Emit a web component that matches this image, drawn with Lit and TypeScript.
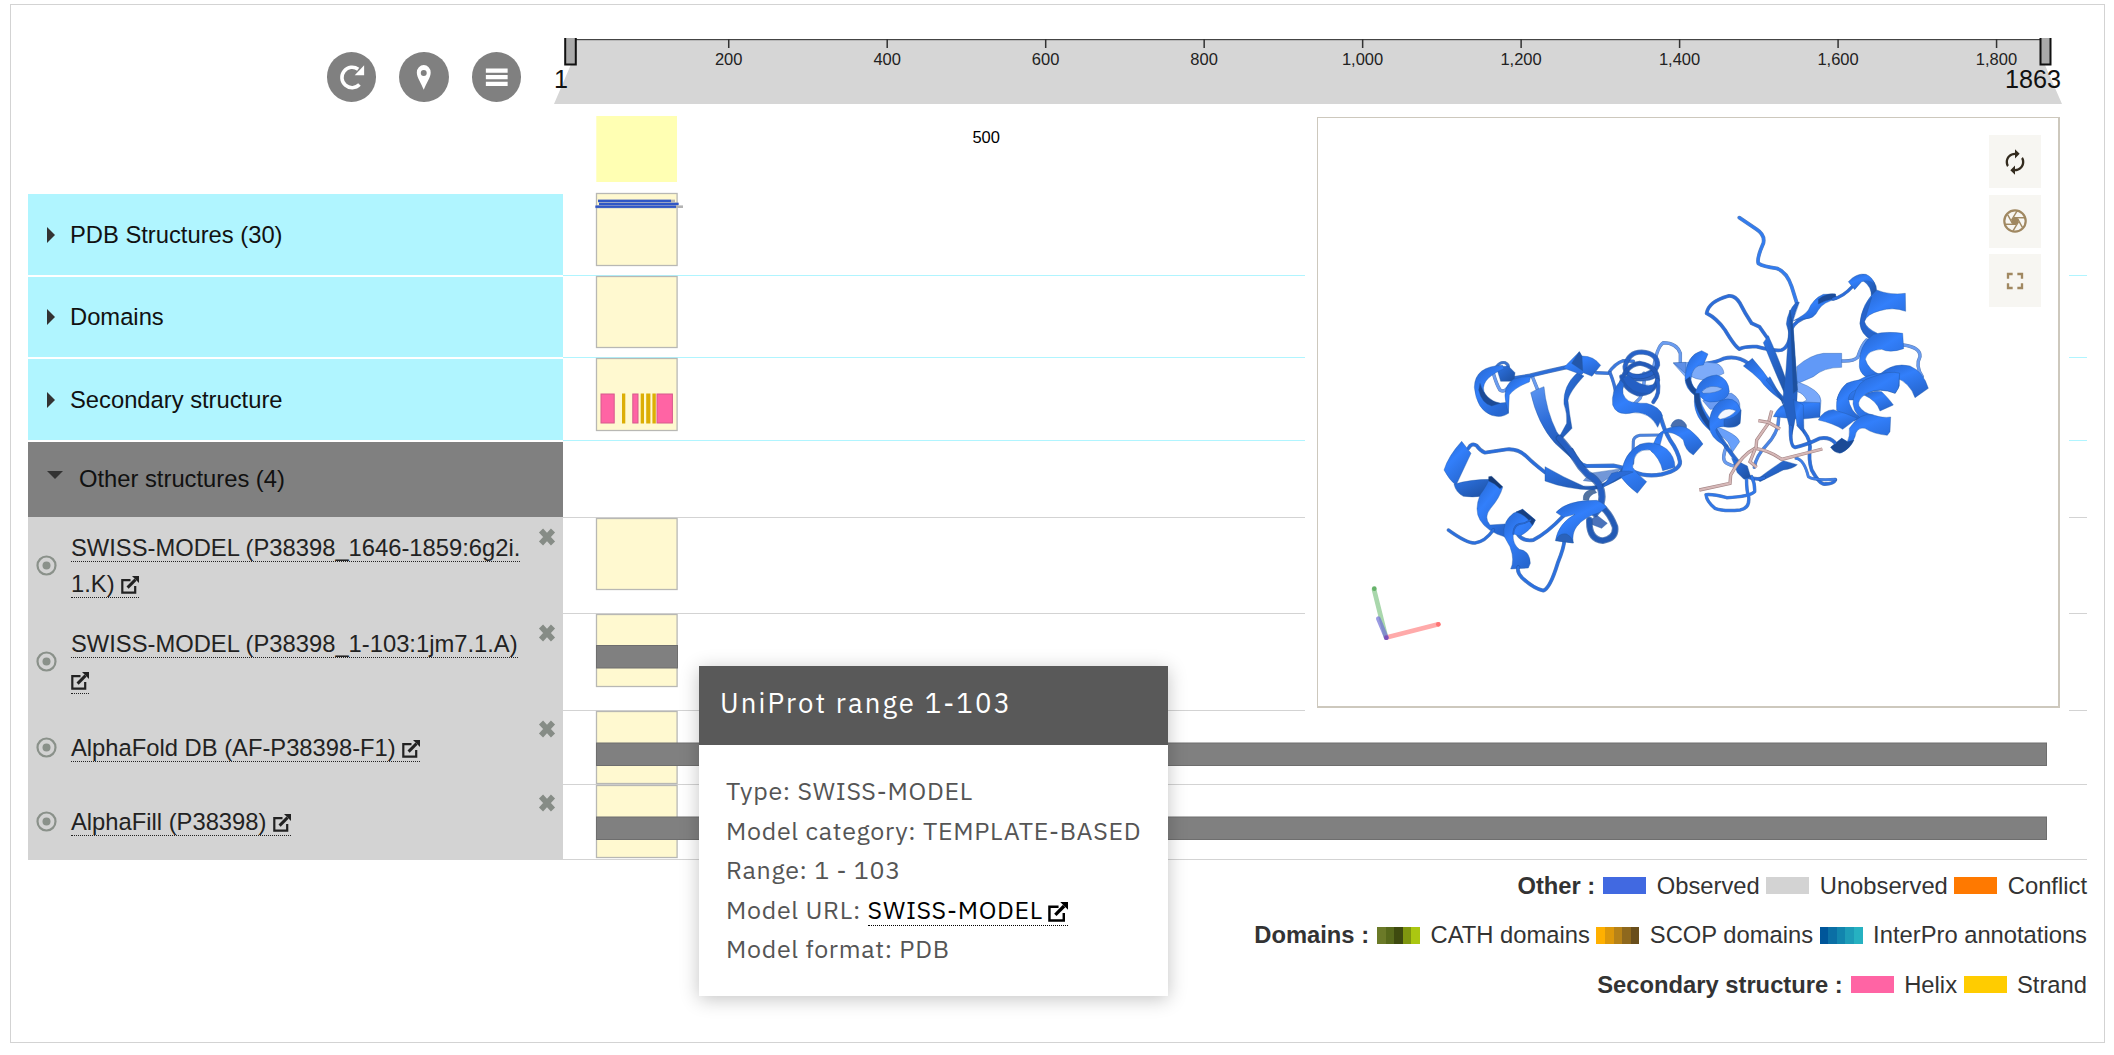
import { LitElement, html, svg, css } from "lit";
import { customElement, property } from "lit/decorators.js";

const BASE = "url(#ribbon)";
const DARK = "url(#ribbonDark)";
const LIGHT = "url(#ribbonLight)";
const DEEP = "#1b4a96";

type Shape = { k: "fill" | "coil" | "band"; d: string; c?: string; w?: number };
const f = (d: string, c: string = BASE): Shape => ({ k: "fill", d, c });
const coil = (d: string, c = "#2f78e8", w = 10): Shape => ({ k: "coil", d, c, w: w < 12 ? w * 1.15 : w });
const faint = (d: string): Shape => coil(d, "#6a9cf0", 9);

const leftDomain: Shape[] = [
  faint("M580 -20Q590 15 600 30Q612 38 622 25"),
  faint("M698 -8L712 27"),
  faint("M1060 -30Q1070 -100 1090 -112Q1130 -112 1141 -80L1141 -45"),
  faint("M1032 -20Q1036 20 1020 55L1000 75"),
  coil("M1080 165L1020 166Q1000 170 1000 185L998 250", "#4a83e0", 8),
  f("M870 280Q900 275 965 266L905 308L850 302Z", "#7297d8"),
  f("M1112 138Q1122 112 1145 120Q1165 132 1158 150L1120 146Z", "#4a6fae"),
  f("M850 360Q846 332 882 326L890 338Q866 345 866 362Z", "#54739f"),
  f("M862 428L905 445L922 430L890 405Z", "#4a72ba"),
  coil("M590 -40Q600 -55 615 -52Q628 -45 624 -36", "#3a74cf", 8),
  coil("M640 -5L690 -13L740 -25L797 -38", "#2c6dd8", 11),
  f("M692 38L707 30L732 20Q738 90 770 155L795 190L838 245L820 240L765 190Q712 130 692 38Z", LIGHT),
  f("M832 -22L852 -12Q806 38 804 62Q808 100 816 145L782 180L776 174L800 130Q802 100 792 72Q788 18 832 -22Z", DARK),
  coil("M815 210Q835 255 860 258L940 257Q975 263 1000 275Q1040 292 1085 283Q1142 270 1140 245Q1135 215 1110 180Q1092 150 1083 115", "#2b70df", 11),
  coil("M735 277Q700 250 680 230Q655 205 620 208L555 218Q540 212 530 197Q515 187 505 205", "#2a6ddb", 10),
  f("M735 260Q790 292 850 318Q900 325 950 285L968 262L968 292Q922 320 880 330Q800 328 735 303Z", DARK),
  f("M1055 215Q1062 165 1095 148Q1145 128 1170 150Q1195 170 1209 192L1180 225Q1155 212 1150 180Q1120 150 1090 160Q1080 190 1075 225Z"),
  f("M965 280Q970 220 1020 193Q1060 178 1100 207Q1125 230 1125 262L1088 272Q1080 235 1050 210Q1000 205 998 262Q1010 282 1040 305L1012 340Q980 315 962 290Z"),
  coil("M778 175Q808 208 825 235Q840 262 862 282Q905 305 906 350Q905 380 885 400", "#255fc2", 22),
  f("M935 280Q975 268 1000 276L960 292L905 325Z", "#2b6bd6"),
  f("M485 184L513 220L468 316Q448 300 432 270Q445 228 485 184Z"),
  f("M462 313Q510 298 572 298L548 348Q520 353 490 349Q468 338 462 313Z", DARK),
  f("M570 290L608 322Q600 352 572 385Q550 412 570 435L615 432L618 472Q560 455 540 420Q522 390 540 345Q564 312 570 290Z"),
  f("M566 290L575 289L608 320L600 326Q585 310 566 303Z", "#163a75"),
  coil("M445 450Q500 490 525 489Q555 485 580 450", "#2b6fdd", 9),
  coil("M655 465Q670 485 700 480Q740 460 790 408", "#2b6fdd", 10),
  f("M612 468Q606 425 640 400L668 388L706 420Q695 450 660 468L640 462Q636 490 658 508Q690 512 691 550L685 564L632 567Q645 540 630 500Z"),
  f("M648 396L668 388L706 420L697 436Q680 405 648 396Z", "#173f80"),
  coil("M640 462Q640 430 672 430L692 420", "#2866cb", 4),
  coil("M655 562Q650 575 665 592Q700 625 730 632Q750 625 773 550Q793 500 793 480", "#2b70df", 10),
  coil("M868 420Q866 478 908 482Q950 475 945 440Q930 400 905 380", "#225ab5", 20),
  f("M768 397Q800 360 890 361Q915 372 920 382L900 397Q850 412 830 440Q815 460 820 489L766 482Q775 430 825 403L790 412Z"),
  f("M768 482Q776 458 800 462Q816 470 820 489Z", "#2a62bb"),
  f("M590 -35Q605 -42 625 -42L645 -22L642 4L602 4Z", DARK),
  f("M608 -44Q524 -42 523 22Q530 90 575 106Q605 115 625 100L624 66Q575 78 556 45Q532 0 612 -34Z"),
  f("M536 30Q545 70 575 78L600 70Q555 60 540 10Z", DEEP),
  f("M618 70Q606 20 640 -2Q665 -12 692 -10L688 6Q645 22 628 45L625 100Z"),
  f("M790 -36L838 -85L846 -72Q882 -72 902 -44L876 -11L850 -22L845 -16Z"),
  f("M838 -85L846 -70L848 -28L815 -50Z", "#2357aa"),
  coil("M888 -22L925 -20Q945 -50 970 -58L1000 -56", "#3b79df", 9),
  coil("M930 -22Q945 15 947 40", "#3672da", 9),
  f("M980 -25Q1010 -5 1060 -35L1070 -8Q1040 10 990 0Z", "#3265be"),
  coil("M975 -40Q985 -84 1025 -84Q1073 -80 1073 -45Q1060 -8 1010 -10Q975 -15 975 -40Z", "#2762c8", 15),
  coil("M962 25Q970 -45 1020 -50Q1073 -40 1073 0Q1060 42 1015 42Q975 30 965 -10", "#2359b7", 15),
  f("M968 -5Q990 45 1050 40L1070 10Q1030 30 985 -15Z", "#245fc4"),
  f("M938 75Q932 35 962 0L972 12Q960 45 985 62Q1000 70 1040 70Q1080 80 1088 108L1073 142Q1050 95 1000 98Q950 110 938 75Z"),
  coil("M1072 0Q1082 40 1060 66", "#2762c8", 11),
];

const upperRight: Shape[] = [
  faint("M670 735Q722 742 720 770Q705 798 727 830"),
  faint("M485 783Q520 785 533 772Q545 735 560 720"),
  f("M350 800Q390 765 430 760L485 760L485 802Q430 802 400 830L350 852Z", "#6199f7"),
  coil("M262 714L238 680L215 670Q195 640 180 610Q165 585 145 588Q85 605 80 640Q110 655 135 690Q165 740 178 747Q195 738 230 740Q290 755 305 750Q330 740 332 690Q345 660 390 648", "#2b6cda", 10),
  coil("M178 353L230 388Q256 405 250 430Q230 475 235 490Q250 500 290 505Q320 515 335 560L350 608", "#327cef", 10),
  coil("M80 790Q110 786 130 776Q170 765 205 790", "#2f70de", 10),
  f("M250 728L265 707Q290 760 322 850L322 900Q280 805 250 728Z", DARK),
  f("M190 798L217 775Q250 812 275 850Q300 880 330 912L310 905Q262 872 240 840Q218 818 190 798Z"),
  f("M319 672Q322 635 348 607L358 607Q336 660 330 712Z", DARK),
  f("M340 662Q375 645 385 630Q400 595 430 583L466 582L470 598Q430 605 415 630Q402 658 375 656Z"),
  f("M415 598Q440 578 466 582L468 595Q440 600 415 612Z", "#1c4b99"),
  coil("M460 597Q490 590 517 560", "#2b6cda", 9),
  f("M558 530Q590 540 590 572L574 592Q576 560 550 543Z", DARK),
  f("M505 545Q530 518 558 523Q578 532 584 552Q565 538 545 545L524 569Z"),
  f("M540 670Q545 610 590 570Q630 586 676 580L677 634Q640 620 600 632Q560 642 553 665Q560 685 592 700L575 720Q543 705 540 670Z"),
  f("M553 665L575 592Q545 625 540 670Q543 700 575 720L590 703Q556 690 553 665Z", "#2764cb"),
  f("M538 800Q535 735 580 703Q620 693 668 700L671 746Q630 760 605 748Q562 750 556 778Q565 810 602 825L590 845Q540 830 538 800Z"),
  f("M600 822Q640 786 690 798Q730 815 745 865L705 893Q690 848 645 832Z"),
  f("M470 900Q480 860 530 843Q580 812 658 820L658 858L646 880Q600 862 560 880Q540 885 525 900Z"),
];

const lowerRight: Shape[] = [
  f("M412 155Q482 180 483 212L480 250L415 225L440 210Q430 190 412 185Z", "#78a8fa"),
  f("M40 100L75 98Q120 90 170 100Q190 110 192 130L160 145Q120 155 95 140L80 145Z", "#7dabf9"),
  f("M40 98L78 97L76 130Z", "#5d8ee6"),
  f("M128 212Q170 186 215 190Q242 205 240 235L150 238Z", "#6b9cf2"),
  f("M165 288Q232 312 239 335L215 370Q212 330 175 315Z", "#69a0fa"),
  faint("M200 348Q182 390 200 400Q220 412 240 408"),
  coil("M356 265Q356 308 320 345Q288 378 283 412", "#4884e8", 9),
  coil("M415 285Q450 320 450 350Q445 390 455 420Q480 465 495 462Q520 462 526 450", "#2c6fdd", 10),
  coil("M526 448Q462 452 445 440Q432 388 408 385", "#3e7fe9", 8),
  f("M292 448Q320 425 370 392L412 404Q400 416 370 420Q330 440 300 455Z", DARK),
  coil("M262 440Q290 452 312 443", "#2b6cda", 10),
  coil("M260 425Q258 480 266 500Q270 535 240 540Q190 545 165 535Q140 515 138 494Q160 492 200 503Q270 500 284 485Q285 460 275 440", "#3077e8", 9),
  coil("M160 290Q195 350 245 410", "#2869d3", 13),
  f("M215 385L262 408L272 440L252 448L232 428Z", DARK),
  f("M340 260Q355 230 370 225L400 215L480 218L480 262L420 268Z"),
  f("M318 150Q355 190 372 230L366 205L330 140Z", DARK),
  f("M390 -60L400 0L412 180Q412 250 395 322L383 270L368 212L378 120Z", "#2461c4"),
  f("M390 -60L400 0L412 180L400 190Z", "#1d509f"),
  f("M400 208L430 225L432 310L410 280Z"),
  f("M75 145Q78 75 125 62L144 72L130 105Q95 105 93 150Q96 172 118 185L105 197Q75 175 75 145Z"),
  f("M76 150Q84 180 105 195L110 180Q94 170 90 140Z", DEEP),
  f("M103 215Q105 140 170 135Q206 145 208 185Q200 217 150 216Q132 214 122 200Q118 220 150 265L150 302Q103 262 103 215Z"),
  f("M125 185Q150 158 188 176Q170 190 130 190Z", "#8fb5f5"),
  f("M103 190Q100 240 150 300L156 285Q118 240 118 190Z", DEEP),
  f("M148 290Q145 240 180 213Q225 192 243 240L240 280Q230 297 190 290Q170 290 167 300Q170 320 205 352L190 345Q150 322 148 290Z"),
  f("M173 262Q190 226 228 242Q212 262 180 268Z", "#f3f7ff"),
  f("M192 268Q225 268 243 240L240 280Q220 296 192 288Z", DARK),
  f("M530 240Q525 190 560 160Q600 145 612 153L600 178Q570 180 565 205Q570 245 605 265L582 272Q550 262 530 240Z"),
  f("M612 195Q640 180 665 185Q690 210 700 225L660 243Q650 212 612 195Z"),
  f("M580 205Q590 150 640 140Q690 120 719 130L715 175L705 190Q660 170 620 190Q590 210 597 228Q610 250 640 255L608 272Q573 240 580 205Z"),
  f("M475 270Q490 240 520 239Q560 250 592 265L548 298Q520 280 475 270Z"),
  f("M568 295Q600 245 640 255Q670 265 692 261L690 305L682 316Q640 312 615 295Q590 290 585 320Q572 355 545 368L512 352L545 325L562 335Q570 320 568 295Z"),
  f("M512 352L545 325L562 335L582 330Q570 358 540 370Q522 368 512 352Z", DEEP),
  coil("M392 290Q390 350 405 352Q440 345 480 325Q508 320 525 338", "#2a6cda", 10),
];

const ligand = [
  "M118 480L210 460L212 435Q245 375 285 355Q325 360 365 388L487 357",
  "M288 355L290 330L325 280L335 242",
  "M295 272L325 277L360 297",
  "M285 358L270 395L290 412",
];

const drawShapes = (list: Shape[]) =>
  list.map((s) =>
    s.k === "fill"
      ? svg`<path d=${s.d} fill=${s.c} stroke="#22569f" stroke-opacity=".55" stroke-width="2" stroke-linejoin="round"/>`
      : svg`<path d=${s.d} fill="none" stroke="#1c4d98" stroke-opacity=".7" stroke-width=${s.w!} stroke-linecap="round" stroke-linejoin="round"/>
            <path d=${s.d} fill="none" stroke=${s.c!} stroke-width=${s.w! * 0.72} stroke-linecap="round" stroke-linejoin="round"/>`
  );

const externalIcon = html`<svg class="ext" viewBox="0 0 18 18">
  <path d="M9.5 4.2H1.3V16.7H14.2V10" fill="none" stroke="currentColor" stroke-width="2.2" />
  <path d="M6.6 11.6L14.5 3.6" stroke="currentColor" stroke-width="3" />
  <path d="M11 0H18V7Z" fill="currentColor" />
</svg>`;

@customElement("structure-viewer")
class StructureViewer extends LitElement {
  static styles = css`
    :host { display: block; background: #fff; padding: 12px 9px 12px 12px; box-sizing: border-box; }
    .frame { position: relative; box-sizing: border-box; width: 743px; height: 591px; border: 1px solid #cdc8bd; border-right-width: 2px; border-bottom-width: 2px; }
    .canvas { display: block; width: 740px; height: 588px; }
    .controls { position: absolute; top: 17px; right: 17px; display: flex; flex-direction: column; gap: 6.5px; }
    .control { width: 52px; height: 53px; background: #f7f6f2; color: #a08861; display: flex; align-items: center; justify-content: center; }
    .control.active { color: #332b1f; }
    .control svg { width: 28px; height: 28px; }
  `;
  render() {
    return html`<div class="frame">
      <svg class="canvas" viewBox="1318 118 740 588">
        <defs>
          <linearGradient id="ribbon" x1="0" y1="0" x2=".6" y2="1">
            <stop offset="0" stop-color="#2563c9" /><stop offset=".45" stop-color="#327ffb" /><stop offset="1" stop-color="#2767d0" />
          </linearGradient>
          <linearGradient id="ribbonDark" x1="0" y1="0" x2="1" y2="1">
            <stop offset="0" stop-color="#2d74e6" /><stop offset="1" stop-color="#1d4f9f" />
          </linearGradient>
          <linearGradient id="ribbonLight" x1="0" y1="0" x2=".3" y2="1">
            <stop offset="0" stop-color="#5d97f3" /><stop offset=".5" stop-color="#2f6ed9" /><stop offset="1" stop-color="#2257ae" />
          </linearGradient>
        </defs>
        <g transform="translate(1300 380) scale(.33333)">
          ${drawShapes(leftDomain)}
          <g fill="none" stroke-linecap="round" stroke-width="14">
            <path d="M222 628L258 772" stroke="#a9d7ac" />
            <path d="M262 772L415 733" stroke="#ffaaaa" />
            <path d="M235 716L259 773" stroke="#6f6fd6" stroke-opacity=".7" />
          </g>
          <circle cx="223" cy="626" r="7" fill="#66b26a" />
          <circle cx="415" cy="733" r="7" fill="#ff7373" />
          <circle cx="259" cy="773" r="7" fill="#7d52b8" />
        </g>
        <g transform="translate(1680 100) scale(.33333)">${drawShapes(upperRight)}</g>
        <g transform="translate(1660 330) scale(.33333)">
          ${drawShapes(lowerRight)}
          ${ligand.map((d) => svg`<path d=${d} fill="none" stroke="#a58787" stroke-width="10"/><path d=${d} fill="none" stroke="#d6b8b8" stroke-width="6"/>`)}
        </g>
      </svg>
      <div class="controls">
        <div class="control active">
          <svg viewBox="0 0 24 24" fill="currentColor"><path d="M12 6v3l4-4-4-4v3c-4.42 0-8 3.58-8 8 0 1.57.46 3.03 1.24 4.26L6.7 14.8c-.45-.83-.7-1.79-.7-2.8 0-3.31 2.69-6 6-6zm6.76 1.74L17.3 9.2c.44.84.7 1.79.7 2.8 0 3.31-2.69 6-6 6v-3l-4 4 4 4v-3c4.42 0 8-3.58 8-8 0-1.57-.46-3.03-1.24-4.26z" /></svg>
        </div>
        <div class="control">
          <svg viewBox="-14 -14 28 28" fill="none" stroke="currentColor">
            <circle r="10.7" stroke-width="2.2" /><circle r="3.6" fill="currentColor" stroke="none" />
            ${[0, 60, 120, 180, 240, 300].map((a) => svg`<path d="M-1 -3.4L9.2 -3.2" stroke-width="1.4" transform=${`rotate(${a})`}/>`)}
          </svg>
        </div>
        <div class="control">
          <svg viewBox="0 0 24 24" fill="currentColor"><path d="M7 14H5v5h5v-2H7v-3zm-2-4h2V7h3V5H5v5zm12 7h-3v2h5v-5h-2v3zM14 5v2h3v3h2V5h-5z" /></svg>
        </div>
      </div>
    </div>`;
  }
}

@customElement("legend-row")
class LegendRow extends LitElement {
  @property() title_ = "";
  @property({ attribute: false }) items: { label: string; colors: string[] }[] = [];
  static styles = css`
    :host { display: flex; justify-content: flex-end; align-items: center; height: 49.5px; font: 23.75px/28px "Liberation Sans", Arial, sans-serif; color: #333; white-space: nowrap; }
    .name { font-weight: bold; margin-right: 1.5px; }
    .swatch { display: flex; width: 43px; height: 17px; margin: 0 10.5px 0 6.5px; }
    .swatch i { flex: 1; }
  `;
  render() {
    return html`<span class="name">${this.title_} :</span>
      ${this.items.map((i) => html`<span class="swatch">${i.colors.map((c) => html`<i style="background:${c}"></i>`)}</span><span>${i.label}</span>`)}`;
  }
}

type Row = {
  kind: "closed" | "open" | "model";
  label: string;
  top: number;
  height: number;
  line: number;
  lineColor: string;
  box?: [number, number];
  bar?: [number, number];
};

const CYAN = "#b0f5ff";
const GREY = "#d3d3d3";
const rows: Row[] = [
  { kind: "closed", label: "PDB Structures (30)", top: 194, height: 83, line: 275, lineColor: CYAN, box: [193, 266] },
  { kind: "closed", label: "Domains", top: 277, height: 82, line: 357, lineColor: CYAN, box: [276, 348] },
  { kind: "closed", label: "Secondary structure", top: 359, height: 83, line: 440, lineColor: CYAN, box: [358, 431] },
  { kind: "open", label: "Other structures (4)", top: 442, height: 75, line: 517, lineColor: GREY },
  { kind: "model", label: "SWISS-MODEL (P38398_1646-1859:6g2i.1.K)", top: 517, height: 96, line: 613, lineColor: GREY, box: [518, 590] },
  { kind: "model", label: "SWISS-MODEL (P38398_1-103:1jm7.1.A)", top: 613, height: 97, line: 710, lineColor: GREY, box: [614, 687], bar: [645, 678] },
  { kind: "model", label: "AlphaFold DB (AF-P38398-F1)", top: 710, height: 74, line: 784, lineColor: GREY, box: [711, 784], bar: [742.5, 2047] },
  { kind: "model", label: "AlphaFill (P38398)", top: 784, height: 76, line: 859, lineColor: GREY, box: [785, 858], bar: [816.5, 2047] },
];

const pdbBars = [
  { y: 200, x: 598, w: 73, tail: 4 },
  { y: 203, x: 599, w: 79.5, tail: 0 },
  { y: 205.8, x: 595.5, w: 80.5, tail: 7 },
];
const helices = [[601, 13.2], [632.8, 5.2], [657, 15.4]];
const strands = [[622, 3.3], [640.7, 3.3], [646.2, 4.2], [652.4, 3.4]];

@customElement("app-root")
class AppRoot extends LitElement {
  static styles = css`
    :host { display: block; height: 1055px; overflow: hidden; background: #fff; font: 23.75px/28px "Liberation Sans", Arial, sans-serif; color: #111; }
    .panel { position: relative; box-sizing: border-box; width: 2095px; height: 1039px; margin-left: 10px; border: 1px solid #d3d3d3; padding: 0 17px; }
    .page { padding-top: 4px; }
    .header { display: flex; height: 189px; }
    .tools { box-sizing: border-box; width: 535px; padding: 47px 42px 0 0; display: flex; justify-content: flex-end; gap: 23px; }
    .tool { width: 49.5px; height: 50px; border-radius: 50%; background: #808080; }
    .tool svg { display: block; width: 100%; height: 100%; }
    .ruler, .track { display: block; width: 1524px; overflow: visible; flex: none; }
    .tick { font: 16.5px "Liberation Sans", Arial, sans-serif; fill: #222; text-anchor: middle; }
    .edge { font: 25.2px "Liberation Sans", Arial, sans-serif; fill: #111; }
    .row { display: flex; }
    .label { box-sizing: border-box; width: 535px; flex: none; display: flex; }
    .closed { margin-bottom: 2px; background: #b0f5ff; align-items: center; padding-left: 19px; gap: 15px; }
    .closed::before { content: ""; border: solid transparent; border-width: 8.5px 0 8.5px 8.5px; border-left-color: #333; }
    .open { background: #808080; padding: 22px 0 0 19px; gap: 16px; line-height: 30px; }
    .open::before { content: ""; width: 0; height: 0; margin-top: 7px; border: solid transparent; border-width: 8px 8px 0; border-top-color: #333; }
    .model { background: #d3d3d3; padding: 0 7px 0 8px; color: #222; }
    .radio { width: 21px; height: 21px; flex: none; margin-top: 37.5px; }
    .short .radio { margin-top: 26.5px; }
    .text { width: 455px; margin: 12.7px 0 0 14px; line-height: 36px; word-break: break-all; }
    .short .text { margin-top: 19.7px; }
    .link { border-bottom: 1.5px dotted currentColor; }
    .ext { width: 18px; height: 18px; vertical-align: -2px; }
    .close { width: 18px; height: 18px; margin: 11px 0 0 auto; flex: none; }
    .short .close { margin-top: 10px; }
    .legend { padding-top: 1px; }
    .viewer { position: absolute; left: 1294px; top: 100px; width: 764px; height: 615px; }
    .tip { position: absolute; left: 688px; top: 661px; width: 469px; height: 330px; background: #fff; box-shadow: 0 3px 18px rgba(0,0,0,.24); font-family: "IBM Plex Sans", "Noto Sans", sans-serif; color: #555; }
    .tip-head { height: 79px; box-sizing: border-box; background: #595959; color: #fff; padding: 17px 0 0 21px; font-size: 27.5px; line-height: 40px; letter-spacing: 2.1px; white-space: nowrap; }
    .tip-body { padding: 26px 27px; font-size: 25px; line-height: 39.5px; letter-spacing: .7px; white-space: nowrap; }
    .tip-body .link { color: #000; display: inline-block; line-height: 30px; }
    .tip-body .ext { width: 20px; height: 20px; vertical-align: -3px; margin-left: -2px; }
  `;

  private track(r: Row, i: number) {
    const h = r.height;
    return html`<svg class="track" style="height:${h}px" viewBox="563 ${r.top} 1524 ${h}">
      <rect x="563" y=${r.line} width="1524" height="1" fill=${r.lineColor} />
      ${r.box ? svg`<rect x="596.5" y=${r.box[0] + 0.5} width="80.6" height=${r.box[1] - r.box[0] - 1} fill="#fff9d0" stroke="#b8b8b4" stroke-width="1.3"/>` : ""}
      ${i === 0 ? pdbBars.map((b) => svg`<rect x=${b.x + b.w} y=${b.y - 0.4} width=${b.tail} height="2.6" fill="#b3b3b3"/><rect x=${b.x} y=${b.y - 0.6} width=${b.w} height="3" fill="#7a8cc4"/><rect x=${b.x} y=${b.y} width=${b.w} height="2" fill="#3057c6"/>`) : ""}
      ${i === 2 ? helices.map(([x, w]) => svg`<rect x=${x} y="394" width=${w} height="29" fill="#ff64a4" stroke="#d65a8c" stroke-width="1"/>`) : ""}
      ${i === 2 ? strands.map(([x, w]) => svg`<rect x=${x} y="393.5" width=${w} height="30" fill="#dcae05"/>`) : ""}
      ${r.bar ? svg`<rect x="596.5" y=${r.bar[0] + 0.5} width=${r.bar[1] - 597} height="22.5" fill="#808080" stroke="#6e6e6e" stroke-width="1"/>` : ""}
    </svg>`;
  }

  private label(r: Row, i: number) {
    if (r.kind !== "model") return html`<div class="label ${r.kind}">${r.label}</div>`;
    return html`<div class="label model ${i > 5 ? "short" : ""}">
      <svg class="radio" viewBox="0 0 21 21"><circle cx="10.5" cy="10.5" r="9" fill="none" stroke="#8a918a" stroke-width="2.2" /><circle cx="10.5" cy="10.5" r="4" fill="#8a918a" /></svg>
      <div class="text"><span class="link">${r.label} ${externalIcon}</span></div>
      <svg class="close" viewBox="0 0 18 18"><path d="M3 2.5L15 15.5M15 2.5L3 15.5" stroke="#868c86" stroke-width="5.6" /></svg>
    </div>`;
  }

  render() {
    const ticks = [200, 400, 600, 800, 1000, 1200, 1400, 1600, 1800];
    return html`<div class="page"><div class="panel">
      <div class="header">
        <div class="tools">
          <div class="tool"><svg viewBox="0 0 50 50"><path d="M32.8 32.6A10.3 10.3 0 1 1 31.5 17.2" fill="none" stroke="#fff" stroke-width="3.6" /><path d="M37.5 13.2V23.2H28Z" fill="#fff" /></svg></div>
          <div class="tool"><svg viewBox="0 0 50 50"><path d="M25 38C22.5 31.5 18 25.5 18 20.5A7 7.5 0 0 1 32 20.5C32 25.5 27.5 31.5 25 38Z" fill="#fff" /><circle cx="25" cy="21" r="3" fill="#808080" /></svg></div>
          <div class="tool"><svg viewBox="0 0 50 50"><path d="M14 18.5H36M14 25.2H36M14 32H36" stroke="#fff" stroke-width="4.2" /></svg></div>
        </div>
        <svg class="ruler" height="189" viewBox="563 5 1524 189">
          <path d="M572 39H2045V65L2062 104H554L572 62Z" fill="#d6d6d6" />
          <rect x="572" y="39" width="1474" height="1.2" fill="#444" />
          ${ticks.map((t) => {
            const x = 570.2 + t * 0.7924;
            return svg`<rect x=${x - 0.7} y="39" width="1.5" height="9" fill="#333"/><text class="tick" x=${x} y="65">${t.toLocaleString("en-US")}</text>`;
          })}
          <path d="M565.2 38V64.5H575.8V38" fill="#aaa" stroke="#111" stroke-width="2" />
          <path d="M2040.5 38V64.5H2050.5V38" fill="#aaa" stroke="#111" stroke-width="2" />
          <text class="edge" x="554" y="88">1</text>
          <text class="edge" x="2005" y="88">1863</text>
          <rect x="596.3" y="116" width="80.7" height="66" fill="#ffffb3" />
          <text class="tick" x="986.2" y="143" style="fill:#000">500</text>
        </svg>
      </div>
      ${rows.map((r, i) => html`<div class="row">${this.label(r, i)}${this.track(r, i)}</div>`)}
      <div class="legend">
        <legend-row .title_=${"Other"} .items=${[
          { label: "Observed", colors: ["#4169e1"] },
          { label: "Unobserved", colors: ["#d3d3d3"] },
          { label: "Conflict", colors: ["#ff7900"] },
        ]}></legend-row>
        <legend-row .title_=${"Domains"} .items=${[
          { label: "CATH domains", colors: ["#6b7a28", "#57691b", "#3e4a0f", "#7f960f", "#abc711"] },
          { label: "SCOP domains", colors: ["#ffb000", "#dd980a", "#b78217", "#8e681d", "#694e1b"] },
          { label: "InterPro annotations", colors: ["#00569a", "#0b6fa5", "#1285ae", "#1d9cb8", "#26b1c1"] },
        ]}></legend-row>
        <legend-row .title_=${"Secondary structure"} .items=${[
          { label: "Helix", colors: ["#ff64a4"] },
          { label: "Strand", colors: ["#ffcc00"] },
        ]}></legend-row>
      </div>
      <structure-viewer class="viewer"></structure-viewer>
      <div class="tip">
        <div class="tip-head">UniProt range 1-103</div>
        <div class="tip-body">
          <div>Type: SWISS-MODEL</div>
          <div>Model category: TEMPLATE-BASED</div>
          <div>Range: 1 - 103</div>
          <div>Model URL: <span class="link">SWISS-MODEL ${externalIcon}</span></div>
          <div>Model format: PDB</div>
        </div>
      </div>
    </div></div>`;
  }
}
